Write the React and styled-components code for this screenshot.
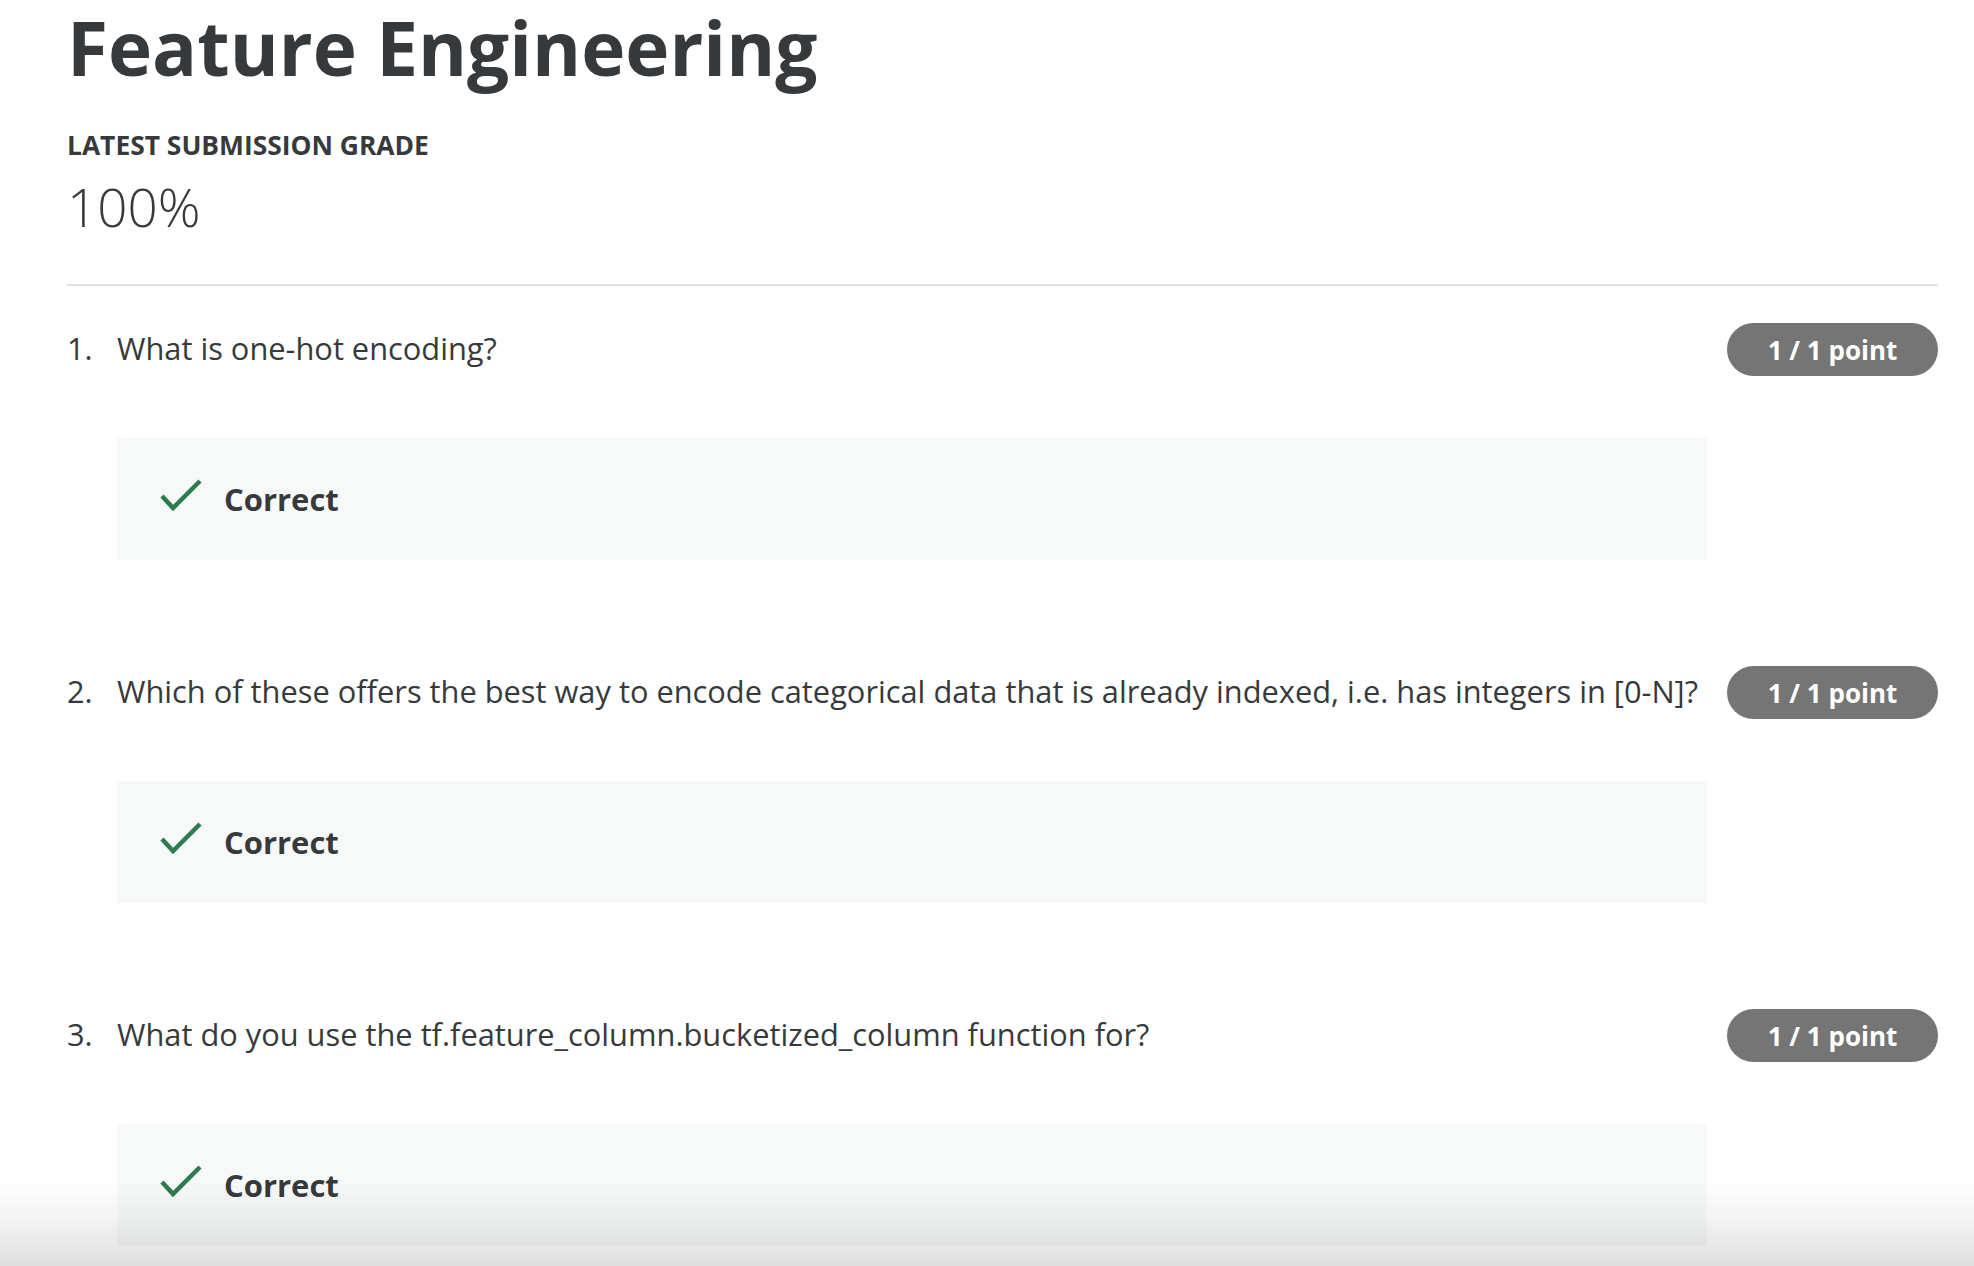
import React from "react";
import styled, { createGlobalStyle } from "styled-components";

const GlobalStyle = createGlobalStyle`
  html, body {
    margin: 0;
    padding: 0;
    background: #ffffff;
  }
  body {
    font-family: "Open Sans", "Liberation Sans", Arial, sans-serif;
    color: #373a3c;
    overflow: hidden;
  }
`;

const questions = [
  { id: 1, text: "What is one-hot encoding?" },
  {
    id: 2,
    text:
      "Which of these offers the best way to encode categorical data that is already indexed, i.e. has integers in [0-N]?",
  },
  { id: 3, text: "What do you use the tf.feature_column.bucketized_column function for?" },
];

const Page = styled.div`
  padding: 3px 36px 0 67px;
`;

const Title = styled.h1`
  margin: 0;
  font-size: 74.7px;
  line-height: 88px;
  font-weight: 700;
  color: #373a3c;
`;

const GradeLabel = styled.div`
  margin-top: 38px;
  font-size: 26.4px;
  line-height: 32px;
  font-weight: 700;
  text-transform: uppercase;
  color: #373a3c;
`;

const GradeValue = styled.div`
  margin-top: 14px;
  font-size: 53px;
  line-height: 64px;
  font-weight: 300;
  color: #373a3c;
`;

const Divider = styled.hr`
  margin: 45px 0 0;
  border: 0;
  border-top: 2px solid #e1e1e1;
`;

const QuestionList = styled.ol`
  list-style: none;
  margin: 0;
  padding: 0;
`;

const Question = styled.li`
  display: grid;
  grid-template-columns: 30px 1fr 211px;
  column-gap: 20px;
  padding-top: ${(p) => (p.first ? 36 : 105)}px;
  & > * {
    min-width: 0;
  }
`;

const Number = styled.span`
  font-size: 30.8px;
  line-height: 52px;
  white-space: nowrap;
`;

const Prompt = styled.div`
  font-size: 30.8px;
  line-height: 52px;
  white-space: nowrap;
  color: #373a3c;
`;

const PointPill = styled.span`
  display: flex;
  align-items: center;
  justify-content: center;
  height: 53px;
  border-radius: 27px;
  background: #757575;
  color: #ffffff;
  font-size: 26px;
  font-weight: 700;
  margin-top: 1px;
`;

const Feedback = styled.div`
  grid-column: 2 / 3;
  margin-top: 62px;
  height: 122px;
  background: #f7f9f9;
  display: flex;
  align-items: center;
  gap: 22px;
  padding-left: 43px;
`;

const CheckIcon = styled.svg`
  width: 42px;
  height: 32px;
  flex: none;
  margin-top: -8px;
`;

const FeedbackText = styled.span`
  font-size: 31px;
  font-weight: 700;
  color: #373a3c;
`;

const BottomShade = styled.div`
  position: fixed;
  left: 0;
  right: 0;
  bottom: 0;
  height: 86px;
  pointer-events: none;
  background: linear-gradient(
    to bottom,
    rgba(0, 0, 0, 0) 0%,
    rgba(0, 0, 0, 0.05) 50%,
    rgba(0, 0, 0, 0.13) 100%
  );
`;

function Check() {
  return (
    <CheckIcon viewBox="0 0 42 32">
      <path
        d="M2 17 L13 29 L40 2"
        fill="none"
        stroke="#2e7b50"
        strokeWidth="4.5"
      />
    </CheckIcon>
  );
}

export default function App() {
  return (
    <>
      <GlobalStyle />
      <Page>
        <Title>Feature Engineering</Title>
        <GradeLabel>Latest Submission Grade</GradeLabel>
        <GradeValue>100%</GradeValue>
        <Divider />
        <QuestionList>
          {questions.map((q, i) => (
            <Question key={q.id} first={i === 0}>
              <Number>{q.id}.</Number>
              <Prompt>{q.text}</Prompt>
              <PointPill>1 / 1 point</PointPill>
              <Feedback>
                <Check />
                <FeedbackText>Correct</FeedbackText>
              </Feedback>
            </Question>
          ))}
        </QuestionList>
      </Page>
      <BottomShade />
    </>
  );
}
